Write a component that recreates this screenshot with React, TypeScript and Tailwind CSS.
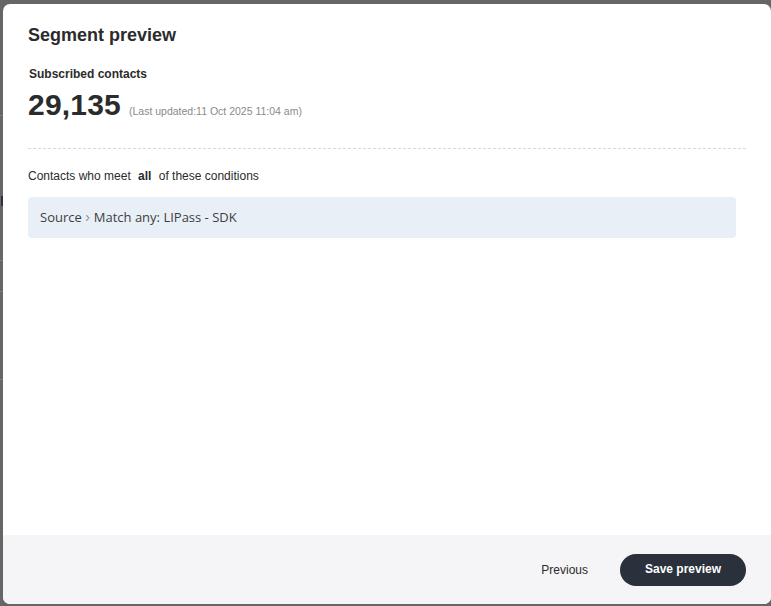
import React from "react";

function Chevron() {
  return (
    <svg width="8" height="10" viewBox="0 0 8 10" className="mx-[2px] shrink-0" fill="none">
      <path d="M2.5 2.5 L5 5 L2.5 7.5" stroke="#9a9a9a" strokeWidth="1.1" strokeLinecap="round" strokeLinejoin="round" />
    </svg>
  );
}

export default function App() {
  return (
    <div className="relative h-[606px] w-[771px] overflow-hidden bg-[#666666]" style={{ fontFamily: '"Liberation Sans", Arial, sans-serif' }}>
      <div className="absolute left-0 top-[115px] h-px w-[3px] bg-[#7a7a7a]" />
      <div className="absolute left-[1px] top-[196px] h-[10px] w-[2px] bg-[#2c3344]" />
      <div className="absolute left-0 top-[260px] h-px w-[3px] bg-[#7a7a7a]" />
      <div className="absolute left-0 top-[291px] h-px w-[3px] bg-[#7a7a7a]" />
      <div className="absolute left-0 top-[379px] h-px w-[3px] bg-[#7a7a7a]" />
      <div className="relative ml-[3px] mt-[4px] flex h-[600px] w-[768px] flex-col overflow-hidden rounded-[7px] bg-white">
        <div className="flex flex-1 flex-col px-[25px] pt-[19px]">
          <h2 className="text-[18px] font-bold leading-[24px] text-[#2b2b2b]">Segment preview</h2>
          <div className="mt-[19px] pl-px text-[12px] font-bold leading-[16px] text-[#2b2b2b]">Subscribed contacts</div>
          <div className="mt-[5px] flex items-baseline">
            <span className="text-[30px] font-bold leading-[36px] tracking-[0.2px] text-[#2b2b2b]">29,135</span>
            <span className="ml-[8px] text-[10.5px] leading-[14px] text-[#8a8a8a]">(Last updated:11 Oct 2025 11:04 am)</span>
          </div>
          <div className="mt-[25px] border-t border-dashed border-[#d8d8d8]" />
          <div className="mt-[19px] text-[12px] leading-[16px] text-[#2b2b2b]">
            Contacts who meet <span className="mx-[4px] font-bold">all</span> of these conditions
          </div>
          <div
            className="mr-[10px] mt-[13px] flex h-[41px] items-center rounded-[4px] bg-[#e8eff6] px-[12px] text-[13px] text-[#3e3e3e]"
            style={{ fontFamily: '"Open Sans", "Noto Sans", sans-serif' }}
          >
            <span>Source</span>
            <Chevron />
            <span>Match any: LIPass - SDK</span>
          </div>
        </div>
        <div className="flex h-[69px] items-center justify-end bg-[#f5f5f7] pr-[25px]">
          <button className="mr-[32px] text-[12px] text-[#2b2b2b]">Previous</button>
          <button className="flex h-[32px] w-[126px] items-center justify-center rounded-full bg-[#2a303c] pb-px text-[12px] font-bold text-white">
            Save preview
          </button>
        </div>
      </div>
    </div>
  );
}
